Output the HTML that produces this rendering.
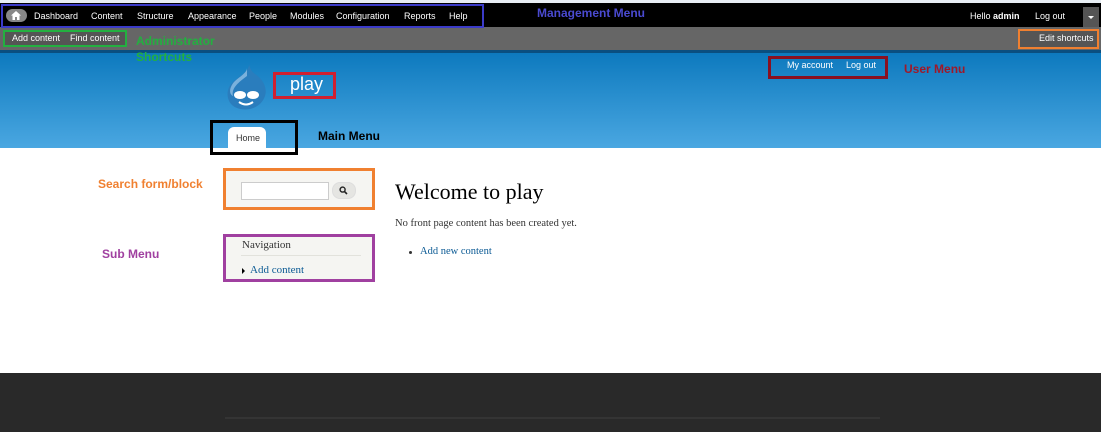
<!DOCTYPE html>
<html><head><meta charset="utf-8"><style>
*{margin:0;padding:0;box-sizing:border-box}
body{width:1101px;height:432px;overflow:hidden;position:relative;background:#fff;font-family:"Liberation Sans",sans-serif}
.a{position:absolute}
.tb{font-size:9px;color:#fff;top:11px}
.ann{font-weight:bold;font-size:12px}
.serif{font-family:"Liberation Serif",serif}
</style></head><body>
<div class="a" style="left:0;top:0;width:1101px;height:3px;background:#e8eef4"></div>
<div class="a" style="left:0;top:3px;width:1101px;height:24px;background:#000"></div>
<div class="a" style="left:0;top:27px;width:1101px;height:23px;background:#666"></div>
<div class="a" style="left:0;top:50px;width:1101px;height:98px;background:linear-gradient(#0b78bd,#4aa7e1)"></div>
<div class="a" style="left:0;top:50px;width:1101px;height:3px;background:#0a4f80"></div>
<!-- toolbar -->
<div class="a" style="left:6px;top:9px;width:21px;height:13px;border-radius:7px;background:#888"></div>
<svg class="a" style="left:11px;top:11px" width="10" height="9" viewBox="0 0 10 9"><path d="M5 0L0 4.5H1.5V9H4V6H6V9H8.5V4.5H10Z" fill="#fff"/></svg>
<div class="a tb" style="left:34px">Dashboard</div>
<div class="a tb" style="left:91px">Content</div>
<div class="a tb" style="left:137px">Structure</div>
<div class="a tb" style="left:188px">Appearance</div>
<div class="a tb" style="left:249px">People</div>
<div class="a tb" style="left:290px">Modules</div>
<div class="a tb" style="left:336px">Configuration</div>
<div class="a tb" style="left:404px">Reports</div>
<div class="a tb" style="left:449px">Help</div>
<div class="a" style="left:1px;top:4px;width:483px;height:24px;border:2px solid #3b3bc8"></div>
<div class="a ann" style="left:537px;top:6px;color:#4a4ad0">Management Menu</div>
<div class="a tb" style="left:970px">Hello <b>admin</b></div>
<div class="a tb" style="left:1035px">Log out</div>
<div class="a" style="left:1083px;top:7px;width:16px;height:20px;background:#555"></div>
<div class="a" style="left:1088px;top:16px;border-left:3px solid transparent;border-right:3px solid transparent;border-top:3px solid #fff"></div>
<!-- shortcuts -->
<div class="a" style="left:3px;top:30px;width:124px;height:17px;border:2px solid #23b040;background:#555"></div>
<div class="a tb" style="left:12px;top:33px">Add content</div>
<div class="a tb" style="left:70px;top:33px">Find content</div>
<div class="a ann" style="left:136px;top:33px;color:#23b040;line-height:16px">Administrator<br>Shortcuts</div>
<div class="a" style="left:1018px;top:29px;width:81px;height:20px;border:2px solid #f08030;background:#555"></div>
<div class="a tb" style="left:1039px;top:33px">Edit shortcuts</div>
<!-- header -->
<svg class="a" style="left:225px;top:64px" width="42" height="46" viewBox="0 0 42 46"><path d="M24 0C24 8 14 12 7 19C0 26 1 40 12 44C22 48 36 44 40 32C43 22 36 14 30 10C26 7 25 4 24 0Z" fill="#2a7dbd"/><path d="M22 4C22 9 14 13 9 18C4 24 4 30 8 32C6 24 14 18 22 12Z" fill="#9cc8ea" opacity=".7"/><ellipse cx="15" cy="31" rx="6" ry="4" fill="#fff"/><ellipse cx="28" cy="31" rx="6" ry="4" fill="#fff"/><path d="M14 38Q21 43 28 38" stroke="#fff" stroke-width="2" fill="none"/></svg>
<div class="a" style="left:273px;top:72px;width:63px;height:27px;border:3px solid #d02030"></div>
<div class="a" style="left:290px;top:74px;color:#fff;font-size:18px">play</div>
<div class="a" style="left:768px;top:56px;width:120px;height:23px;border:3px solid #8a1020"></div>
<div class="a tb" style="left:787px;top:60px">My account</div>
<div class="a tb" style="left:846px;top:60px">Log out</div>
<div class="a ann" style="left:904px;top:62px;color:#a01828">User Menu</div>
<div class="a" style="left:228px;top:127px;width:38px;height:21px;background:#fff;border-radius:6px 6px 0 0"></div>
<div class="a" style="left:236px;top:133px;font-size:9px;color:#333">Home</div>
<div class="a" style="left:210px;top:120px;width:88px;height:35px;border:3px solid #000"></div>
<div class="a ann" style="left:318px;top:129px;color:#000">Main Menu</div>
<!-- body -->
<div class="a ann" style="left:98px;top:177px;color:#f08030">Search form/block</div>
<div class="a" style="left:223px;top:168px;width:152px;height:42px;border:3px solid #f08030;background:#f5f5f2"></div>
<div class="a" style="left:241px;top:182px;width:88px;height:18px;border:1px solid #ccc;background:#fff"></div>
<div class="a" style="left:332px;top:182px;width:24px;height:17px;border-radius:8px;background:#e5e5e2;border:1px solid #ddd"></div>
<svg class="a" style="left:339px;top:186px" width="9" height="9" viewBox="0 0 9 9"><circle cx="3.6" cy="3.6" r="2.5" stroke="#222" stroke-width="1.4" fill="none"/><path d="M5.4 5.4L8 8" stroke="#222" stroke-width="1.6"/></svg>
<div class="a ann" style="left:102px;top:247px;color:#a040a0">Sub Menu</div>
<div class="a" style="left:223px;top:234px;width:152px;height:48px;border:3px solid #a040a0;background:#f5f5f2"></div>
<div class="a serif" style="left:242px;top:239px;font-size:11px;color:#333">Navigation</div>
<div class="a" style="left:241px;top:255px;width:120px;height:1px;background:#e2e2dc"></div>
<div class="a" style="left:242px;top:268px;border-top:3px solid transparent;border-bottom:3px solid transparent;border-left:3px solid #000"></div>
<div class="a serif" style="left:250px;top:264px;font-size:11px;color:#0b5a94">Add content</div>
<div class="a serif" style="left:395px;top:179px;font-size:22px;color:#000">Welcome to play</div>
<div class="a serif" style="left:395px;top:218px;font-size:10.5px;color:#333">No front page content has been created yet.</div>
<div class="a" style="left:409px;top:251px;width:3px;height:3px;border-radius:50%;background:#333"></div>
<div class="a serif" style="left:420px;top:246px;font-size:10.5px;color:#0b5a94">Add new content</div>
<!-- footer -->
<div class="a" style="left:0;top:373px;width:1101px;height:59px;background:#292929"></div>
<div class="a" style="left:225px;top:417px;width:655px;height:2px;background:#343434"></div>
</body></html>
